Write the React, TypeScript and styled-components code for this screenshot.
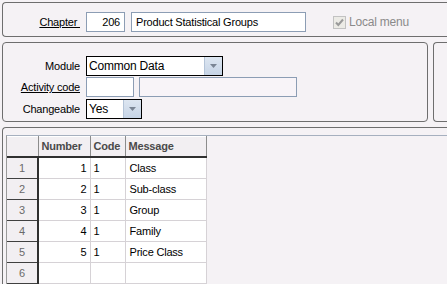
import styled, { createGlobalStyle } from 'styled-components'

const GlobalStyle = createGlobalStyle`
  html, body {
    margin: 0;
    padding: 0;
  }
  body {
    background: #f5f2f5;
    font-family: 'Liberation Sans', Arial, sans-serif;
    font-size: 11px;
    letter-spacing: -0.2px;
    color: #000;
    overflow: hidden;
  }
`

const Page = styled.div`
  width: 447px;
  height: 284px;
  overflow: hidden;
  box-sizing: border-box;
  padding: 2px 0 0 2px;
  display: flex;
  flex-direction: column;
  gap: 5px;
`

const Panel = styled.div<{ $open?: boolean }>`
  box-sizing: border-box;
  border: 1px solid #6e6e6e;
  border-radius: 4px;
  ${(p) =>
    p.$open &&
    `
    border-right: none;
    border-top-right-radius: 0;
    border-bottom-right-radius: 0;
  `}
`

const HeaderPanel = styled(Panel)`
  height: 35px;
  display: flex;
  align-items: flex-start;
  padding-top: 9px;
`

const Label = styled.span<{ $link?: boolean }>`
  width: 77px;
  margin-right: 6px;
  text-align: right;
  line-height: 20px;
  white-space: nowrap;
  text-decoration: ${(p) => (p.$link ? 'underline' : 'none')};
`

const TextBox = styled.div<{ $w: number; $right?: boolean; $dim?: boolean }>`
  box-sizing: border-box;
  width: ${(p) => p.$w}px;
  height: 20px;
  border: 1px solid #8c9db4;
  background: ${(p) => (p.$dim ? '#f8f4f8' : '#fff')};
  padding: 0 4px;
  line-height: 18px;
  text-align: ${(p) => (p.$right ? 'right' : 'left')};
  white-space: nowrap;
  overflow: hidden;
`

const Check = styled.label`
  display: flex;
  align-items: center;
  margin-left: 27px;
  margin-top: 3px;
  gap: 3px;
  color: #8a8a8a;
  font-size: 12px;
`

const CheckBox = styled.span`
  box-sizing: border-box;
  width: 13px;
  height: 13px;
  border: 1px solid #c2c2c2;
  background: #ecebe6;
  display: flex;
  align-items: center;
  justify-content: center;
`

const MiddleRow = styled.div`
  display: flex;
  gap: 5px;
  height: 80px;
`

const FormPanel = styled(Panel)`
  width: 426px;
  padding-top: 13px;
  display: flex;
  flex-direction: column;
  gap: 1px;
`

const SidePanel = styled(Panel)`
  flex: 1;
`

const FormRow = styled.div`
  display: flex;
  align-items: center;
  height: 20px;
`

const Select = styled.div<{ $w: number }>`
  box-sizing: border-box;
  width: ${(p) => p.$w}px;
  height: 20px;
  border: 1px solid #000;
  background: #fff;
  display: flex;
  align-items: stretch;
`

const SelectText = styled.span`
  flex: 1;
  padding-left: 2px;
  line-height: 18px;
  font-size: 12px;
`

const DropButton = styled.span`
  width: 17px;
  border-left: 1px solid #b4c4d8;
  background: linear-gradient(#dde6f1, #c6d4e6);
  display: flex;
  align-items: center;
  justify-content: center;
`

const GridPanel = styled(Panel)`
  flex: 1;
  border-bottom: none;
  border-bottom-left-radius: 0;
  padding: 7px 0 0 3px;
`

const GridFrame = styled.div`
  border-top: 1px solid #a6b0bf;
  border-left: 1px solid #9a9a9a;
  height: 100%;
`

const Table = styled.table`
  border-collapse: collapse;
  table-layout: fixed;
  font-size: 11px;
`

const HeadCell = styled.th<{ $w: number }>`
  width: ${(p) => p.$w}px;
  height: 20px;
  padding: 0 0 0 3px;
  background: #f2eff2;
  border-right: 1px solid #8c8c8c;
  border-bottom: 2px solid #303030;
  border-top: 1px solid #fff;
  text-align: left;
  font-weight: bold;
  color: #4a4a4a;
  box-sizing: border-box;
`

const RowHead = styled.td`
  height: 20px;
  background: #f2eff2;
  border-right: 2px solid #303030;
  border-bottom: 1px solid #404040;
  color: #6a6a6a;
  text-align: center;
  padding: 0;
`

const Cell = styled.td<{ $align?: 'left' | 'right' }>`
  height: 20px;
  background: #fff;
  border-right: 1px solid #d6d2d6;
  border-bottom: 1px solid #d6d2d6;
  text-align: ${(p) => p.$align || 'left'};
  padding: 0 3px;
  white-space: nowrap;
`

const rows = [
  { n: 1, code: '1', msg: 'Class' },
  { n: 2, code: '1', msg: 'Sub-class' },
  { n: 3, code: '1', msg: 'Group' },
  { n: 4, code: '1', msg: 'Family' },
  { n: 5, code: '1', msg: 'Price Class' },
]

const Arrow = () => (
  <svg width="7" height="4" viewBox="0 0 7 4">
    <path d="M0 0h7L3.5 4z" fill="#7a8594" />
  </svg>
)

export default function App() {
  return (
    <>
      <GlobalStyle />
      <Page>
        <HeaderPanel $open>
          <Label $link>Chapter&nbsp;</Label>
          <TextBox $w={39} $right>
            206
          </TextBox>
          <TextBox $w={175} style={{ marginLeft: 6 }}>
            Product Statistical Groups
          </TextBox>
          <Check>
            <CheckBox>
              <svg width="9" height="9" viewBox="0 0 9 9">
                <path d="M1 4.5l2.3 2.5L8 1.5" stroke="#9a9a9a" strokeWidth="2" fill="none" />
              </svg>
            </CheckBox>
            Local menu
          </Check>
        </HeaderPanel>

        <MiddleRow>
          <FormPanel>
            <FormRow>
              <Label>Module</Label>
              <Select $w={137}>
                <SelectText>Common Data</SelectText>
                <DropButton>
                  <Arrow />
                </DropButton>
              </Select>
            </FormRow>
            <FormRow>
              <Label $link>Activity code</Label>
              <TextBox $w={48} />
              <TextBox $w={158} $dim style={{ marginLeft: 5 }} />
            </FormRow>
            <FormRow style={{ marginTop: 1 }}>
              <Label>Changeable</Label>
              <Select $w={56}>
                <SelectText>Yes</SelectText>
                <DropButton>
                  <Arrow />
                </DropButton>
              </Select>
            </FormRow>
          </FormPanel>
          <SidePanel $open />
        </MiddleRow>

        <GridPanel $open>
          <GridFrame>
            <Table>
              <thead>
                <tr>
                  <HeadCell $w={31} />
                  <HeadCell $w={52}>Number</HeadCell>
                  <HeadCell $w={35}>Code</HeadCell>
                  <HeadCell $w={81}>Message</HeadCell>
                </tr>
              </thead>
              <tbody>
                {rows.map((r) => (
                  <tr key={r.n}>
                    <RowHead>{r.n}</RowHead>
                    <Cell $align="right">{r.n}</Cell>
                    <Cell>{r.code}</Cell>
                    <Cell style={{ paddingLeft: 4 }}>{r.msg}</Cell>
                  </tr>
                ))}
                <tr>
                  <RowHead>6</RowHead>
                  <Cell />
                  <Cell />
                  <Cell />
                </tr>
              </tbody>
            </Table>
          </GridFrame>
        </GridPanel>
      </Page>
    </>
  )
}
